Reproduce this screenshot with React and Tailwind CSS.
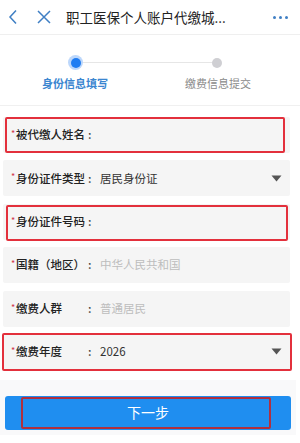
import React from "react";

const font = { fontFamily: '"Noto Sans CJK SC", "Noto Sans", sans-serif' };

function Caret() {
  return (
    <svg width="11" height="7" viewBox="0 0 11 7" className="shrink-0">
      <path d="M0.5 0.5 H10.5 L5.5 6.5 Z" fill="#555" />
    </svg>
  );
}

function Field({ label, value, valueGray, caret, red, redClass }) {
  return (
    <div className="relative h-9 mx-[3px] w-[287px] bg-[#f5f5f5] rounded-[2px] flex items-center pl-[8px] pr-[8px] text-[11.5px] leading-none">
      <span className="text-[#d0344a] text-[9px] w-[5px] -mt-[3px]">*</span>
      <span className="text-[#222] font-medium w-[72px] whitespace-nowrap">{label}</span>
      <span className="text-[#444] w-[12px] font-medium">:</span>
      <span className={valueGray ? "text-[#bdbdbd] flex-1" : "text-[#333] flex-1"}>{value}</span>
      {caret && <Caret />}
      {red && (
        <div className={"absolute border-[2.5px] border-[#e3303c] rounded-[2px] " + redClass} />
      )}
    </div>
  );
}

export default function App() {
  return (
    <div className="w-[300px] h-[443px] bg-white overflow-hidden relative" style={font}>
      {/* header */}
      <div className="h-[35px] flex items-center border-b border-[#efefef]">
        <svg width="10" height="16" viewBox="0 0 10 16" className="ml-[8px]">
          <path d="M8 1.5 L2 8 L8 14.5" fill="none" stroke="#3f7fc4" strokeWidth="1.5" />
        </svg>
        <svg width="14" height="14" viewBox="0 0 14 14" className="ml-[19px]">
          <path d="M1 1 L13 13 M13 1 L1 13" fill="none" stroke="#3f7fc4" strokeWidth="1.5" />
        </svg>
        <span className="ml-[15px] text-[13.5px] text-[#222] whitespace-nowrap">职工医保个人账户代缴城...</span>
        <div className="ml-auto mr-[12px] flex gap-[3px]">
          <span className="w-[3px] h-[3px] rounded-full bg-[#3f7fc4]" />
          <span className="w-[3px] h-[3px] rounded-full bg-[#3f7fc4]" />
          <span className="w-[3px] h-[3px] rounded-full bg-[#3f7fc4]" />
        </div>
      </div>

      {/* steps */}
      <div className="h-[71px] border-b border-[#f0f0f0] relative">
        <div className="absolute left-[75px] top-[27px] w-[142px] h-[1px] bg-[#e6e6e6]" />
        <div className="absolute left-[68px] top-[20px] w-[15px] h-[15px] rounded-full bg-[#bcd7fb] flex items-center justify-center">
          <div className="w-[10px] h-[10px] rounded-full bg-[#1e7cf2]" />
        </div>
        <div className="absolute left-[212px] top-[23px] w-[10px] h-[10px] rounded-full bg-[#cfcfd3]" />
        <div className="absolute left-[40px] top-[40px] w-[70px] text-center text-[11px] font-semibold text-[#3b86d0] whitespace-nowrap">身份信息填写</div>
        <div className="absolute left-[182px] top-[40px] w-[72px] text-center text-[11px] text-[#8a8a8a] whitespace-nowrap">缴费信息提交</div>
      </div>

      {/* fields */}
      <div className="flex flex-col gap-[7.4px] pt-[11px]">
        <Field label="被代缴人姓名" value="" red redClass="left-[2px] top-0 w-[280px] h-[36px]" />
        <Field label="身份证件类型" value="居民身份证" caret />
        <Field label="身份证件号码" value="" red redClass="left-[3px] top-[1px] w-[282px] h-[36px]" />
        <Field label="国籍（地区）" value="中华人民共和国" valueGray />
        <Field label="缴费人群" value="普通居民" valueGray />
        <Field label="缴费年度" value="2026" caret red redClass="-left-[1px] -top-[1px] w-[290px] h-[38px]" />
      </div>

      {/* button area */}
      <div className="mt-[10px] mr-[4px] bg-[#f9f9fa] pt-[16px] pb-[5px]">
        <div className="relative mx-[5px] h-[34px] bg-[#1f8ef0] rounded-[3px] flex items-center justify-center">
          <span className="text-white text-[14px]">下一步</span>
          <div className="absolute left-[16px] top-[1px] w-[250px] h-[32px] border-[2.5px] border-[#b0303f] rounded-[2px]" />
        </div>
      </div>
    </div>
  );
}
